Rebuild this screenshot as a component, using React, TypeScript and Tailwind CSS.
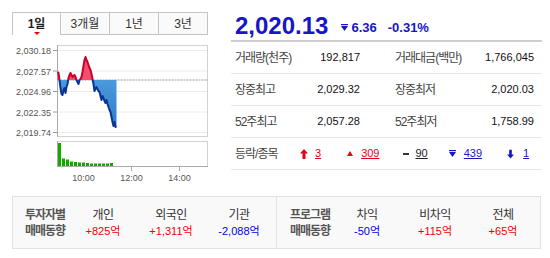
import React from "react";

const line: [number, number][] = [
  [57.5, 72], [58.5, 73], [59.5, 80], [60.5, 88], [61.5, 94], [62.5, 95], [63.5, 90], [64.5, 88],
  [65.5, 93], [66.5, 87], [67.5, 84], [68.5, 78], [69.5, 75], [70.5, 73], [71.5, 75], [72.5, 77],
  [73.5, 76], [74.5, 75], [75.5, 77], [76.5, 80], [77.5, 82], [78.5, 84], [79.5, 80], [80.5, 79],
  [81.5, 77], [82.5, 72], [83.5, 66], [84.5, 60], [85.5, 57], [86.5, 60], [87.5, 62], [88.5, 65],
  [89.5, 68], [90.5, 70], [91.5, 74], [92.5, 79], [93.5, 84], [94.5, 91], [95.5, 89], [96.5, 87],
  [97.5, 89], [98.5, 91], [99.5, 92], [100.5, 96], [101.5, 100], [102.5, 96], [103.5, 98],
  [104.5, 101], [105.5, 103], [106.5, 100], [107.5, 104], [108.5, 107], [109.5, 110], [110.5, 112],
  [111.5, 117], [112.5, 122], [113.5, 126], [114.5, 122], [115.5, 127], [116.5, 127],
];

const bars = [23, 7.5, 6.5, 4.5, 4, 3.5, 3.5, 3, 2.5, 2.5, 2.5, 2.5, 2.5, 3];

const yLabels: [string, number][] = [
  ["2,030.18", 50.5],
  ["2,027.57", 71],
  ["2,024.96", 91.5],
  ["2,022.35", 112],
  ["2,019.74", 132.5],
];

function Chart() {
  const pts = line.map(([x, y]) => `${x},${y}`).join(" ");
  const area = `${pts} 116.5,80 57.5,80`;
  return (
    <svg width="196" height="150" viewBox="12 35 196 150" className="block">
      <defs>
        <clipPath id="up">
          <rect x="0" y="0" width="220" height="80" />
        </clipPath>
        <clipPath id="down">
          <rect x="0" y="80" width="220" height="120" />
        </clipPath>
        <linearGradient id="bluefill" x1="0" y1="0" x2="0" y2="1">
          <stop offset="0" stopColor="#5aa8e6" />
          <stop offset="1" stopColor="#2d7cc8" />
        </linearGradient>
      </defs>
      {yLabels.map(([t, y]) => (
        <g key={t}>
          <line x1="57" x2="208" y1={y} y2={y} stroke="#ececec" strokeWidth="1" />
          <line x1="53" x2="57" y1={y} y2={y} stroke="#999" strokeWidth="1" />
          <text x="51" y={y + 3.5} textAnchor="end" fontSize="9" fill="#555" fontFamily="Liberation Sans, sans-serif">
            {t}
          </text>
        </g>
      ))}
      <rect x="57.5" y="45.5" width="150" height="91" fill="none" stroke="#d2d2d2" />
      <line x1="57.5" x2="57.5" y1="45" y2="137" stroke="#aaa" />
      <line x1="57.5" x2="208" y1="80" y2="80" stroke="#999" strokeDasharray="2 1" />
      <polygon points={area} fill="#f2506f" clipPath="url(#up)" />
      <polygon points={area} fill="url(#bluefill)" clipPath="url(#down)" />
      <polyline points={pts} fill="none" stroke="#c8002a" strokeWidth="2" strokeLinejoin="round" clipPath="url(#up)" />
      <polyline points={pts} fill="none" stroke="#0a3594" strokeWidth="2" strokeLinejoin="round" clipPath="url(#down)" />
      <rect x="57.5" y="141.5" width="150" height="25" fill="none" stroke="#d2d2d2" />
      <line x1="57.5" x2="57.5" y1="141" y2="167" stroke="#aaa" />
      <line x1="57" x2="208" y1="166.5" y2="166.5" stroke="#aaa" />
      {bars.map((h, i) => (
        <rect key={i} x={58 + i * 4} y={166 - h} width="3" height={h} fill="#17a800" />
      ))}
      <line x1="131.5" x2="131.5" y1="167" y2="171" stroke="#aaa" />
      <line x1="179.5" x2="179.5" y1="167" y2="171" stroke="#aaa" />
      {[
        ["10:00", 83.5],
        ["12:00", 131.5],
        ["14:00", 179.5],
      ].map(([t, x]) => (
        <text key={t as string} x={x as number} y="180.5" textAnchor="middle" fontSize="9" fill="#555" fontFamily="Liberation Sans, sans-serif">
          {t}
        </text>
      ))}
    </svg>
  );
}

function DownMark({ color }: { color: string }) {
  return (
    <svg width="7" height="7" viewBox="0 0 7 7" className="block">
      <rect x="0" y="0" width="7" height="1.2" fill={color} />
      <polygon points="0,2 7,2 3.5,7" fill={color} />
    </svg>
  );
}

function Row({ l1, v1, l2, v2 }: { l1: string; v1: string; l2: string; v2: string }) {
  return (
    <div className="h-[32px] flex items-center pl-[4px] pr-[8px] border-b border-[#e8e8e8] whitespace-nowrap">
      <span className="w-[65px] text-[12px] text-[#444] tracking-[-1px]">{l1}</span>
      <span className="w-[60px] text-right text-[11px] text-[#111]">{v1}</span>
      <span className="ml-[35px] w-[70px] text-[12px] text-[#444] tracking-[-1px]">{l2}</span>
      <span className="flex-1 text-right text-[11px] text-[#111]">{v2}</span>
    </div>
  );
}

function Stat({ label, value, color }: { label: string; value: string; color: string }) {
  return (
    <div className="w-[68px] text-center leading-[16px] whitespace-nowrap">
      <div className="text-[12px] text-[#333] tracking-[-0.5px]">{label}</div>
      <div className="text-[11px]" style={{ color }}>
        {value}
      </div>
    </div>
  );
}

export default function App() {
  return (
    <div className="w-[550px] h-[258px] bg-white pt-[12px] pl-[12px] font-['Liberation_Sans','Noto_Sans_CJK_KR',sans-serif] overflow-hidden">
      <div className="flex">
        <div className="w-[196px] shrink-0">
          <div className="grid grid-cols-4 h-[23px] text-[12px]">
            <div className="relative flex items-center justify-center border border-b-0 border-[#c4c4c4] bg-white font-bold text-[#222]">
              1일
              <span className="absolute bottom-[0px] left-1/2 -translate-x-1/2 w-0 h-0 border-l-[3px] border-r-[3px] border-t-[3px] border-l-transparent border-r-transparent border-t-[#e60012]" />
            </div>
            <div className="flex items-center justify-center border-t border-r border-b border-[#c4c4c4] bg-[#fafafa] text-[#333]">3개월</div>
            <div className="flex items-center justify-center border-t border-r border-b border-[#c4c4c4] bg-[#fafafa] text-[#333]">1년</div>
            <div className="flex items-center justify-center border-t border-r border-b border-[#c4c4c4] bg-[#fafafa] text-[#333]">3년</div>
          </div>
          <Chart />
        </div>
        <div className="ml-[23px] w-[311px] shrink-0">
          <div className="h-[30px] flex items-end pl-[4px] border-b-2 border-[#cfcfcf]">
            <span className="text-[24px] leading-[24px] font-bold text-[#1616c8] mb-[2px]">2,020.13</span>
            <span className="ml-[13px] mb-[6px] flex items-center gap-[3px] text-[13px] leading-[13px] font-bold text-[#1616c8]">
              <DownMark color="#1616c8" />
              6.36
            </span>
            <span className="ml-[11px] mb-[6px] text-[13px] leading-[13px] font-bold text-[#1616c8]">-0.31%</span>
          </div>
          <Row l1="거래량(천주)" v1="192,817" l2="거래대금(백만)" v2="1,766,045" />
          <Row l1="장중최고" v1="2,029.32" l2="장중최저" v2="2,020.03" />
          <Row l1="52주최고" v1="2,057.28" l2="52주최저" v2="1,758.99" />
          <div className="h-[32px] flex items-center pl-[4px] border-b border-[#e8e8e8] text-[11px] whitespace-nowrap">
            <span className="w-[65px] text-[12px] text-[#444] tracking-[-1px]">등락/종목</span>
            <span className="flex items-center gap-[7px]">
              <svg width="8" height="10" viewBox="0 0 8 10" className="block">
                <polygon points="4,0 8,4.5 5.5,4.5 5.5,10 2.5,10 2.5,4.5 0,4.5" fill="#e60012" />
              </svg>
              <span className="underline text-[#e60012]">3</span>
            </span>
            <span className="ml-[26px] flex items-center gap-[8px]">
              <svg width="6" height="5" viewBox="0 0 6 5" className="block">
                <polygon points="3,0 6,5 0,5" fill="#e60012" />
              </svg>
              <span className="underline text-[#e60012]">309</span>
            </span>
            <span className="ml-[24px] flex items-center gap-[6px]">
              <span className="block w-[6px] h-[2px] bg-[#333]" />
              <span className="underline text-[#222]">90</span>
            </span>
            <span className="ml-[21px] flex items-center gap-[8px]">
              <DownMark color="#1616c8" />
              <span className="underline text-[#1616c8]">439</span>
            </span>
            <span className="ml-[25px] flex items-center gap-[9px]">
              <svg width="7" height="10" viewBox="0 0 8 10" className="block">
                <polygon points="4,10 8,5.5 5.5,5.5 5.5,0 2.5,0 2.5,5.5 0,5.5" fill="#1616c8" />
              </svg>
              <span className="underline text-[#1616c8]">1</span>
            </span>
          </div>
        </div>
      </div>
      <div className="mt-[11px] w-[529px] h-[53px] flex border border-[#e2e2e2] bg-[#f9f9f9]">
        <div className="w-[264px] flex items-center border-r border-[#e2e2e2]">
          <div className="w-[56px] pl-[12px] text-[12px] leading-[16px] font-bold text-[#555] tracking-[-1px] whitespace-nowrap">
            투자자별
            <br />
            매매동향
          </div>
          <Stat label="개인" value="+825억" color="#f00000" />
          <Stat label="외국인" value="+1,311억" color="#f00000" />
          <Stat label="기관" value="-2,088억" color="#0000e6" />
        </div>
        <div className="flex-1 flex items-center">
          <div className="w-[56px] pl-[13px] text-[12px] leading-[16px] font-bold text-[#555] tracking-[-1px] whitespace-nowrap">
            프로그램
            <br />
            매매동향
          </div>
          <Stat label="차익" value="-50억" color="#0000e6" />
          <Stat label="비차익" value="+115억" color="#f00000" />
          <Stat label="전체" value="+65억" color="#f00000" />
        </div>
      </div>
    </div>
  );
}
